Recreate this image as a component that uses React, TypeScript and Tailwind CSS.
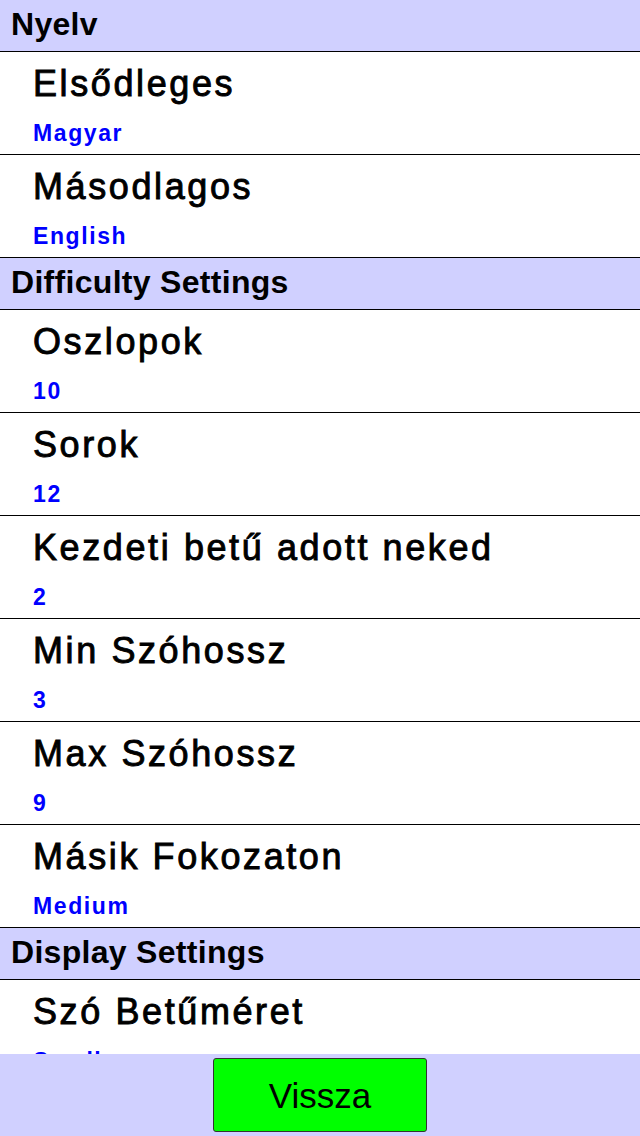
const sections = [
  {
    title: "Nyelv",
    items: [
      { label: "Elsődleges", value: "Magyar" },
      { label: "Másodlagos", value: "English" },
    ],
  },
  {
    title: "Difficulty Settings",
    items: [
      { label: "Oszlopok", value: "10" },
      { label: "Sorok", value: "12" },
      { label: "Kezdeti betű adott neked", value: "2" },
      { label: "Min Szóhossz", value: "3" },
      { label: "Max Szóhossz", value: "9" },
      { label: "Másik Fokozaton", value: "Medium" },
    ],
  },
  {
    title: "Display Settings",
    items: [
      { label: "Szó Betűméret", value: "Small" },
      { label: "Rács Betűméret", value: "Medium" },
    ],
  },
];

export default function App() {
  return (
    <div className="flex flex-col w-[640px] h-[1136px] bg-white text-black font-['Liberation_Sans',Arial,sans-serif]">
      <div className="flex-1 overflow-hidden">
        {sections.map((section) => (
          <div key={section.title}>
            <div className="h-[52px] bg-[#d0d0ff] border-b border-black pl-[11px] pt-[6px] text-[32px] leading-[36px] font-bold tracking-[0.3px] whitespace-nowrap">
              {section.title}
            </div>
            {section.items.map((item) => (
              <div key={item.label} className="h-[103px] border-b border-black pl-[33px] pt-[12px] whitespace-nowrap">
                <div className="text-[36px] leading-[40px] tracking-[2.6px] [-webkit-text-stroke:0.9px_black]">
                  {item.label}
                </div>
                <div className="mt-[16px] text-[23px] leading-[26px] font-bold tracking-[1.6px] text-[#0000ff]">
                  {item.value}
                </div>
              </div>
            ))}
          </div>
        ))}
      </div>
      <div className="h-[82px] bg-[#d0d0ff] flex justify-center items-center">
        <button className="w-[214px] h-[74px] bg-[#00ff00] border border-[#333] rounded-[3px] text-[35px] leading-none">
          Vissza
        </button>
      </div>
    </div>
  );
}
